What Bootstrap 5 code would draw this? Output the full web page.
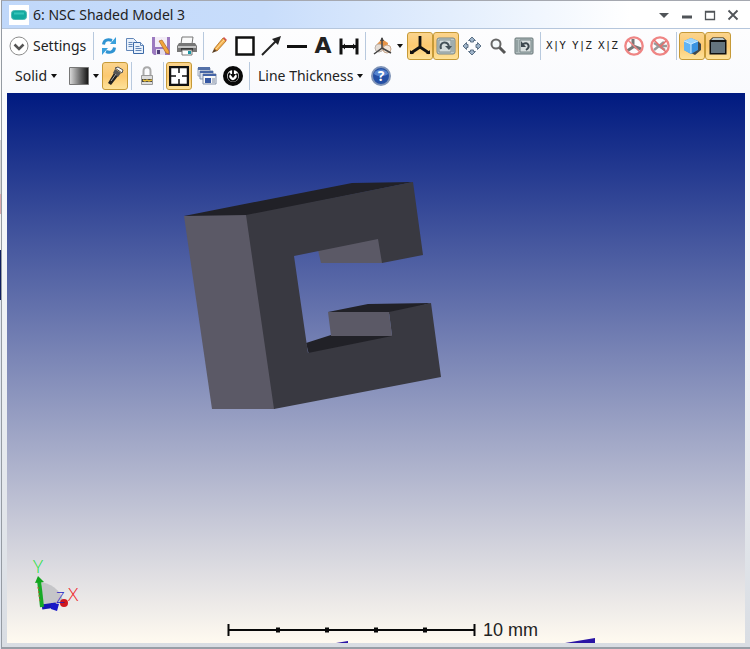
<!DOCTYPE html>
<html lang="en">
<head>
<meta charset="utf-8">
<meta name="viewport" content="width=device-width, initial-scale=1">
<title>NSC Shaded Model</title>
<link rel="stylesheet" href="https://cdn.jsdelivr.net/npm/bootstrap@5.3.0/dist/css/bootstrap.min.css">
<script src="https://cdn.jsdelivr.net/npm/bootstrap@5.3.0/dist/js/bootstrap.bundle.min.js"></script>
<style>
body { font-family: "Noto Sans", "Open Sans", sans-serif; font-size: 14px; line-height: 20px; color: #222;
  background: linear-gradient(#fafafa 0 140px, #d4d4d4 140px 194px, #d9a8ac 194px 214px, #f0f0f0 214px 250px, #0f1f5e 250px 300px, #dfe5ef 300px); }
.viewer { margin-left: 1px; background: #fcfcfd; border-top: 1px solid #a5a8b0; border-left: 1px solid #959ba3; border-bottom: 2px solid #989ea6; }
.titlebar { height: 28px; padding: 0 6px 0 7px; border-bottom: 1px solid #b5c6dc; background: linear-gradient(90deg, #c0d8fa 0, #c8ddfb 35%, #e3eefd 60%, #fff 84%); }
.titlebar h1 { font-size: 14px; line-height: 20px; }
.winctl { width: 23px; height: 24px; }
.tools { padding: 2px 4px 2px 5px; background: linear-gradient(#fdfdfe, #f9fafd); }
.tools > div { height: 30px; }
.tool { height: 28px; min-width: 26px; border: 1px solid transparent; border-radius: 3px; color: #222; background: none; padding: 0; }
.tool.on { border-color: #c69a38; background: linear-gradient(#fbd48d, #fcc970 50%, #fde29a); }
.tool svg, .winctl svg, .titlebar svg { display: block; flex: none; }
.solid-tool { width: 55px; padding-left: 7px; }
.settings-tool { width: 83px; padding: 0 1px; gap: 4px; }
.line-tool { width: 116px; padding-left: 5px; }
.wide-tool { width: 39px; }
.shade-tool { width: 40px; padding-left: 6px; }
.clone-tool { margin-left: 2px; }
.letter-tool { font: 700 22px/24px "DejaVu Sans", sans-serif; }
.plane-tool { width: 26px; font: 11px/24px "DejaVu Sans Mono", monospace; }
.axis-label { font: 300 19px "Open Sans", sans-serif; }
.divider { width: 1px; height: 28px; margin: 0 2px 0 3px; background: #b8c9de; }
.caret { width: 0; height: 0; border: 3px solid transparent; border-top: 4px solid #111; border-bottom: 0; }
.stage { padding: 0 5px 4px; background: linear-gradient(#fafbfd, #eceff3 50%, #d9dde3); }
.stage-view { background: linear-gradient(#001a80, #fffaf0); }
</style>
</head>
<body>
<main class="viewer d-flex flex-column min-vh-100">
  <header class="titlebar d-flex align-items-center">
    <svg class="bg-white" width="20" height="20" viewBox="0 0 20 20"><rect x="2.500" y="5.500" width="15" height="9" rx="3" fill="#13a99f" stroke="#4fb8b2"/><path d="M5 8.500h10" stroke="#35c4b8" stroke-width="2"/></svg>
    <h1 class="mb-0 ms-1 fw-normal me-auto text-nowrap">6: NSC Shaded Model 3</h1>
    <button class="btn p-0 border-0 winctl d-flex align-items-center justify-content-center" aria-label="Window menu"><svg width="12" height="12"><path d="M1 4h10L6 9z" fill="#505458"/></svg></button>
    <button class="btn p-0 border-0 winctl d-flex align-items-center justify-content-center" aria-label="Minimize"><svg width="12" height="12"><path d="M1 8h10" stroke="#505458" stroke-width="3"/></svg></button>
    <button class="btn p-0 border-0 winctl d-flex align-items-center justify-content-center" aria-label="Maximize"><svg width="12" height="12"><path d="M1.500 2.500h9v8h-9zM1 3h10" fill="none" stroke="#505458" stroke-width="1.300"/></svg></button>
    <button class="btn p-0 border-0 winctl d-flex align-items-center justify-content-center" aria-label="Close"><svg width="12" height="12"><path d="M1.500 1.500l9 9m0-9l-9 9" stroke="#505458" stroke-width="1.800"/></svg></button>
  </header>

  <nav class="tools" aria-label="Model tools">
    <div class="d-flex align-items-center">
      <button class="tool settings-tool d-flex align-items-center text-nowrap"><svg width="20" height="20" fill="none"><circle cx="10" cy="10" r="9" fill="#fff" stroke="#8c8c8c"/><path d="M5.500 8.500l4.500 4.500 4.500-4.500" stroke="#555" stroke-width="2.500"/></svg>Settings</button>
      <span class="divider"></span>
      <button class="tool d-flex align-items-center justify-content-center" aria-label="Refresh"><svg width="20" height="20" fill="none" stroke="#2f93d2" stroke-width="3"><path d="M4.500 8.500C5 3.500 9 3 13 4.500"/><path d="M15.500 11.500C15 16.500 11 17 7 15.500"/><path d="M11 8h6V1zM9 12H3v7z" fill="#38a0dc" stroke="none"/></svg></button>
      <button class="tool d-flex align-items-center justify-content-center" aria-label="Copy"><svg width="20" height="20" fill="#e9f1fb" stroke="#6286b8"><path d="M1.500 2.500h7l3 3v9h-10z"/><path d="M3.500 6.500h4m-4 2h4m-4 2h4"/><path d="M8.500 6.500h7l3 3v8h-10z" stroke="#3c6aa8"/><path d="M15.500 6.500v3h3M10.500 10.500h4m-4 2h6m-6 2h6"/></svg></button>
      <button class="tool d-flex align-items-center justify-content-center" aria-label="Save"><svg width="20" height="20"><path d="M1 1h18v18H3l-2-2z" fill="#9c7ac0"/><path d="M4 1h12v10H4z" fill="#f3edf7"/><path d="M5 13h9v6H5z" fill="#e4dded"/><path d="M6 14h3v4H6z" fill="#51417a"/><path d="M8 5l3-1 7 11v3l-3-1z" fill="#f3a53b" stroke="#a9662a" stroke-width=".7"/></svg></button>
      <button class="tool d-flex align-items-center justify-content-center" aria-label="Print"><svg width="20" height="20"><path d="M5 1h11l-1 7H4z" fill="#fafafa" stroke="#777"/><path d="M2 7h16l2 3v6H0v-6z" fill="#777"/><path d="M1 10h18v2H1z" fill="#c3c3c3"/><path d="M4 12h12v3H4z" fill="#383838"/><path d="M5 14h10v5H5z" fill="#fff" stroke="#777"/><path d="M11 15h3v3h-3z" fill="#1a98a6"/></svg></button>
      <span class="divider"></span>
      <button class="tool d-flex align-items-center justify-content-center" aria-label="Pencil"><svg width="20" height="20"><path d="M5 13L14 2l3 3L8 15z" fill="#f4ae4d" stroke="#a96c22" stroke-width=".8"/><path d="M14 2l1-1 3 3-1 1z" fill="#d65050"/><path d="M5 13l3 2-5 2z" fill="#5a3e22"/><path d="M7 13l8-9" stroke="#ffe09c"/></svg></button>
      <button class="tool d-flex align-items-center justify-content-center" aria-label="Rectangle"><svg width="20" height="20"><rect x="1.500" y="1.500" width="17" height="17" fill="#fff" stroke="#111" stroke-width="2.500"/></svg></button>
      <button class="tool d-flex align-items-center justify-content-center" aria-label="Arrow"><svg width="20" height="20"><path d="M1 19L15 5" stroke="#222" stroke-width="2"/><path d="M20 0l-3 9-6-6z" fill="#222"/></svg></button>
      <button class="tool d-flex align-items-center justify-content-center" aria-label="Line"><svg width="20" height="20"><path d="M0 10.500h20" stroke="#111" stroke-width="3"/></svg></button>
      <button class="tool letter-tool d-flex align-items-center justify-content-center">A</button>
      <button class="tool d-flex align-items-center justify-content-center" aria-label="Measure"><svg width="20" height="20"><path d="M2 2.500v16M18 2.500v16M2 10.500h16" stroke="#111" stroke-width="3"/><path d="M3 10.500l3-3v6zM17 10.500l-3-3v6z" fill="#111"/></svg></button>
      <span class="divider"></span>
      <button class="tool wide-tool d-flex align-items-center justify-content-center gap-1" aria-label="View orientation"><svg width="20" height="20"><path d="M4 8l5-5 6 4-1 7-7 1z" fill="#e69448"/><circle cx="6" cy="12" r="4" fill="#e6ddd5" stroke="#bdb2aa"/><circle cx="14" cy="13" r="4" fill="#f4e7dc" stroke="#c7a78d"/><path d="M9 2v10L1 18M9 12l9 5" fill="none" stroke="#444" stroke-width="1.500"/><path d="M7 5l2-4 2 4z" fill="#444"/></svg><span class="caret"></span></button>
      <button class="tool on d-flex align-items-center justify-content-center" aria-label="Show axes" aria-pressed="true"><svg width="20" height="20"><path d="M10 0v11M10 11L1 17M10 11l9 6" fill="none" stroke="#111" stroke-width="2.800"/><path d="M0 14v4h4zM20 14v4h-4z" fill="#111"/></svg></button>
      <button class="tool on d-flex align-items-center justify-content-center" aria-label="Rotate" aria-pressed="true"><svg width="20" height="20"><rect x="1" y="2" width="18" height="16" rx="2" fill="#bdc9c9" stroke="#7a8888"/><path d="M3 4h12v12H3zM17 4v12" fill="#d5dddd" stroke="#849191"/><path d="M5 13C3 6 11 4 13 10" fill="none" stroke="#435158" stroke-width="2"/><path d="M9 10h7l-3 4z" fill="#435158"/></svg></button>
      <button class="tool d-flex align-items-center justify-content-center" aria-label="Pan"><svg width="20" height="20" fill="#9fb4ca" stroke="#5c7186"><path d="M10 1l3.500 3.500h-2V6h-3V4.500h-2zM10 19l-3.500-3.500h2V14h3v1.500h2zM1 10l3.500-3.500v2H6v3H4.500v2zM19 10l-3.500 3.500v-2H14v-3h1.500v-2z"/></svg></button>
      <button class="tool d-flex align-items-center justify-content-center" aria-label="Zoom"><svg width="20" height="20"><path d="M11 11l6 6" stroke="#555" stroke-width="3"/><circle cx="8" cy="8" r="4.500" fill="#f4f8fa" stroke="#666" stroke-width="2"/></svg></button>
      <button class="tool d-flex align-items-center justify-content-center" aria-label="Reset view"><svg width="20" height="20"><rect x="1" y="2" width="18" height="16" rx="1" fill="#afbcbd" stroke="#667476"/><path d="M6 4h11v12H6zM3 4v12" fill="#d9e0e0" stroke="#788789"/><path d="M9 8c5-3 8 3 3 6" fill="none" stroke="#3c484f" stroke-width="2"/><path d="M7 5v6h5z" fill="#3c484f"/></svg></button>
      <span class="divider"></span>
      <button class="tool plane-tool d-flex align-items-center justify-content-center">X|Y</button>
      <button class="tool plane-tool d-flex align-items-center justify-content-center">Y|Z</button>
      <button class="tool plane-tool d-flex align-items-center justify-content-center">X|Z</button>
      <button class="tool d-flex align-items-center justify-content-center" aria-label="Hide axes"><svg width="20" height="20" fill="none"><path d="M9 3v8l-6 4M9 10l8 3" stroke="#777" stroke-width="3"/><circle cx="10" cy="10" r="8.700" stroke="#ef8584" stroke-width="2.300"/><path d="M4 4l12 12" stroke="#ef8584" stroke-width="1.500"/></svg></button>
      <button class="tool d-flex align-items-center justify-content-center" aria-label="Hide rays"><svg width="20" height="20" fill="none"><path d="M4 7l11 7M4 14l10-8M9 10h8" stroke="#999" stroke-width="2.500"/><circle cx="10" cy="10" r="8.700" stroke="#ef8584" stroke-width="2.300"/><path d="M4 4l12 12M11 10l5-5" stroke="#e46f6d" stroke-width="1.500"/></svg></button>
      <span class="divider"></span>
      <button class="tool on d-flex align-items-center justify-content-center" aria-label="Shaded solid" aria-pressed="true"><svg width="20" height="20"><path d="M11 4l5 1 3 3v6l-6 5-4-2z" fill="#41484b"/><path d="M2 5l7-3 7 3v9l-7 4-7-4z" fill="#3a93e1"/><path d="M2 5l7-3 7 3-7 3z" fill="#9bd5ff"/><path d="M2 5l7 3v10l-7-4z" fill="#62b4f4"/><path d="M2 5l7 3 7-3M9 8v9" fill="none" stroke="#d0edff"/></svg></button>
      <button class="tool on d-flex align-items-center justify-content-center" aria-label="Opacity" aria-pressed="true"><svg width="20" height="20"><path d="M4.500 1.500h11l3 3v14h-17v-14z" fill="#111"/><path d="M5 2h10l2 2H3z" fill="#b6c6cb"/><path d="M3 6h14v11H3z" fill="#64747e"/></svg></button>
    </div>

    <div class="d-flex align-items-center">
      <button class="tool solid-tool d-flex align-items-center gap-1 text-nowrap">Solid<span class="caret"></span></button>
      <button class="tool shade-tool d-flex align-items-center gap-1" aria-label="Shading"><svg width="20" height="18"><defs><linearGradient id="shade"><stop stop-color="#ddd"/><stop offset="1" stop-color="#111"/></linearGradient></defs><path d="M.5.5h19v17H.5z" fill="url(#shade)" stroke="#777"/></svg><span class="caret"></span></button>
      <button class="tool on d-flex align-items-center justify-content-center" aria-label="Lighting" aria-pressed="true"><svg width="20" height="20"><path d="M3 17l6-10 4 3-7 9z" fill="#222"/><path d="M8 7l2-4 6 4-3 4z" fill="#555"/><path d="M10 2l3-1 5 3-1 3z" fill="#f5f5f5" stroke="#555"/><path d="M6 15l5-7" stroke="#aaa"/></svg></button>
      <span class="divider"></span>
      <button class="tool d-flex align-items-center justify-content-center" aria-label="Lock"><svg width="20" height="20"><path d="M6.500 10V5c0-5 7-5 7 0v5" fill="none" stroke="#aaa" stroke-width="2"/><path d="M4.500 9.500h11v9h-11z" fill="#ddd" stroke="#999"/><path d="M5 13h10v3H5z" fill="#444"/><path d="M6 14l2 1 2-1 2 1 3-1" fill="none" stroke="#e8bf3b" stroke-width="1.500"/></svg></button>
      <span class="divider"></span>
      <button class="tool on d-flex align-items-center justify-content-center" aria-label="Fit window" aria-pressed="true"><svg width="20" height="20"><path d="M1 1h18v18H1z" fill="#fff" stroke="#111" stroke-width="2.500"/><path d="M10 2v5M10 13v5M2 10h5M13 10h5" stroke="#111" stroke-width="1.500"/></svg></button>
      <button class="tool clone-tool d-flex align-items-center justify-content-center" aria-label="Clone window"><svg width="20" height="20"><path d="M1 2h12v8H1z" fill="#e7ebf2" stroke="#9da8bc"/><path d="M1 1h12v3H1z" fill="#5571a8"/><path d="M3 5h13v8H3z" fill="#dce2ee" stroke="#7e8fae"/><path d="M3 5h13v2H3z" fill="#4766a5"/><path d="M6 8h13v10H6z" fill="#f7f7f7" stroke="#8290a9"/><path d="M6 8h13v2H6z" fill="#4564a6"/><path d="M8 12h6v5H8z" fill="#3557a3"/><path d="M15 12h3v5h-3z" fill="#b5bdcc"/></svg></button>
      <button class="tool d-flex align-items-center justify-content-center" aria-label="Update"><svg width="20" height="20" fill="none"><circle cx="10" cy="10" r="8" fill="#fff" stroke="#090909" stroke-width="4"/><path d="M7 7a4.500 4.500 0 1 0 6.500 .5M10 3v7" stroke="#090909" stroke-width="1.800"/><path d="M7 8h6l-3 4z" fill="#090909"/></svg></button>
      <span class="divider"></span>
      <button class="tool line-tool d-flex align-items-center gap-1 text-nowrap">Line Thickness<span class="caret"></span></button>
      <button class="tool d-flex align-items-center justify-content-center" aria-label="Help"><svg width="20" height="20"><circle cx="10" cy="10" r="9" fill="#234fa5" stroke="#7e93b7" stroke-width="2"/><path d="M3 8c1-6 13-6 14 0-4 3-10 3-14 0z" fill="#5483cf"/><text x="10" y="15" text-anchor="middle" font-family="Open Sans" font-weight="700" font-size="14" fill="#fff">?</text></svg></button>
    </div>
  </nav>

  <section class="stage flex-grow-1 d-flex" aria-label="Model view">
    <svg class="stage-view w-100" viewBox="0 0 738 550" preserveAspectRatio="xMidYMid meet">
      <g transform="translate(-7 -93)">
        <path d="M184 216l168-33 61-1-166 34z" fill="#212127"/>
        <path d="M184 216l63-1 28 194h-63z" fill="#5b5966"/>
        <path d="M318 250l62-12 3 25h-62z" fill="#5b5966"/>
        <path d="M306 343l25-8h62v3l-84 17z" fill="#212127"/>
        <path d="M328 312l40-8 63-1-41 11z" fill="#212127"/>
        <path d="M246 215l167-33 10 73-41 8-4-24-84 17 14 97 84-17-3-24 42-9 10 74-167 32z" fill="#393941"/>
        <path d="M328 312h61l3 24h-61z" fill="#5b5966"/>
        <path d="M42 582c13 3 21 12 21 21l-21 3z" fill="#c5c5c8"/>
        <circle cx="64" cy="603" r="4" fill="#cf1720"/>
        <path d="M42 607l14-2" stroke="#1717b5" stroke-width="5"/>
        <path d="M51 603l8 1-2 7-6-2z" fill="#1818c8"/>
        <text class="axis-label" x="56" y="603" fill="#2020c4" style="font-size:15px">Z</text>
        <path d="M42 607l-3-27" stroke="#17a926" stroke-width="4"/>
        <path d="M38 576l6 6-9 1z" fill="#12a51e"/>
        <path d="M38 587l2 15" stroke="#bd6536" stroke-dasharray="2 2"/>
        <text class="axis-label" x="38" y="573" text-anchor="middle" fill="#2be044">Y</text>
        <text class="axis-label" x="73" y="601" text-anchor="middle" fill="#ee252b">X</text>
        <path d="M228 630h246M228.500 624v12M474.500 624v12" stroke="#080808" stroke-width="2"/>
        <path d="M276 630h4M325 630h4M374 630h4M423 630h4" stroke="#080808" stroke-width="5"/>
        <text x="483" y="636" font-family="Liberation Sans" font-size="18" fill="#222">10 mm</text>
        <path d="M336 643l12-2v2zM565 643l30-5v5z" fill="#2b15a5"/>
      </g>
    </svg>
  </section>
</main>
</body>
</html>
